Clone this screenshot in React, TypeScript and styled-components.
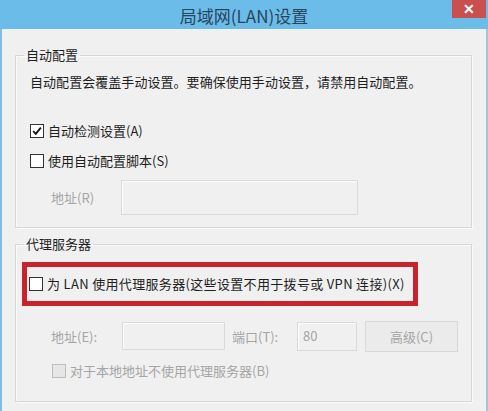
import React from 'react';
import styled, { createGlobalStyle } from 'styled-components';

const GlobalStyle = createGlobalStyle`
	html, body {
		margin: 0;
		padding: 0;
		background: #f0f0f0;
	}
	body {
		font-family: 'Noto Sans CJK SC', 'Noto Sans', 'Liberation Sans', sans-serif;
		font-size: 13px;
		color: #1e1e1e;
	}
`;

const Window = styled.div`
	width: 488px;
	height: 411px;
	display: flex;
	flex-direction: column;
	overflow: hidden;
	background: #6cbce9;
`;

const TitleBar = styled.div`
	height: 29px;
	display: grid;
	grid-template-columns: 1fr auto 1fr;
	align-items: center;
	background: #6cbce9;
`;

const Title = styled.div`
	grid-column: 2;
	font-size: 17px;
	line-height: 29px;
	color: #27465b;
	padding-top: 1px;
`;

const CloseBtn = styled.div`
	grid-column: 3;
	justify-self: end;
	align-self: start;
	width: 34px;
	height: 18px;
	margin-right: 2px;
	background: #c9504e;
	color: #fff;
	display: flex;
	align-items: center;
	justify-content: center;
	font-family: 'Liberation Sans', sans-serif;
	font-size: 14px;
	font-weight: bold;
	line-height: 1;
`;

const Body = styled.div`
	flex: 1;
	background: #f0f0f0;
	border-left: 2px solid #84bde2;
	border-right: 2px solid #a9c4d8;
	padding: 18px 14px 0 13px;
	display: flex;
	flex-direction: column;
`;

const Group = styled.fieldset<{ $top?: number; $bottom: number }>`
	margin: ${(p) => p.$top || 0}px 0 0 0;
	padding: 0 0 ${(p) => p.$bottom}px 0;
	border: 1px solid #d7d7d7;
	box-shadow: inset 1px 1px 0 #fbfbfb, 1px 1px 0 #fbfbfb;
	display: flex;
	flex-direction: column;
	min-width: 0;
`;

const Legend = styled.legend`
	margin-left: 8px;
	padding: 0 2px;
	line-height: 16px;
	font-size: 13px;
	color: #1e1e1e;
`;

const Desc = styled.div`
	margin: 10px 0 0 14px;
	line-height: 18px;
	white-space: nowrap;
	letter-spacing: 0.05px;
`;

const CheckRow = styled.label<{ $top: number; $left: number; $disabled?: boolean; $spacing?: number }>`
	display: flex;
	align-items: center;
	gap: 4px;
	margin: ${(p) => p.$top}px 0 0 ${(p) => p.$left}px;
	height: 18px;
	line-height: 18px;
	white-space: nowrap;
	letter-spacing: ${(p) => p.$spacing || 0}px;
	color: ${(p) => (p.$disabled ? '#a5a5a5' : '#1e1e1e')};
`;

const Box = styled.span<{ $disabled?: boolean }>`
	width: 12px;
	height: 12px;
	flex: none;
	border: 1px solid ${(p) => (p.$disabled ? '#bdbdbd' : '#333')};
	background: ${(p) => (p.$disabled ? '#e6e6e6' : '#fff')};
	display: flex;
	align-items: center;
	justify-content: center;
`;

const Highlight = styled.div`
	margin: 10px 0 0 6px;
	width: 384px;
	height: 34px;
	border: 5px solid #c8222d;
	display: flex;
	align-items: center;
	padding-left: 2px;
`;

const FieldRow = styled.div<{ $top: number }>`
	display: flex;
	align-items: center;
	margin-top: ${(p) => p.$top}px;
	margin-left: 35px;
`;

const FieldLabel = styled.span<{ $width: number; $gap?: number }>`
	width: ${(p) => p.$width}px;
	margin-left: ${(p) => p.$gap || 0}px;
	flex: none;
	color: #a5a5a5;
	white-space: nowrap;
`;

const Input = styled.div<{ $width: number; $height: number }>`
	width: ${(p) => p.$width}px;
	height: ${(p) => p.$height}px;
	box-sizing: border-box;
	border: 1px solid #dadada;
	box-shadow: inset 1px 1px 0 #fdfdfd;
	background: #f0f0f0;
	color: #a5a5a5;
	padding: 3px 0 0 5px;
	flex: none;
`;

const Button = styled.div`
	margin-left: 8px;
	width: 93px;
	height: 31px;
	box-sizing: border-box;
	border: 1px solid #d8d8d8;
	background: #ebebeb;
	color: #a5a5a5;
	display: flex;
	align-items: center;
	justify-content: center;
	flex: none;
	margin-top: 1px;
	align-self: flex-start;
`;

const Check = () => (
	<svg width="10" height="10" viewBox="0 0 10 10">
		<path d="M1.2 5.2 L3.8 7.8 L8.8 1.6" fill="none" stroke="#111" strokeWidth="1.8" />
	</svg>
);

const Checkbox = ({ checked, disabled }: { checked?: boolean; disabled?: boolean }) => (
	<Box $disabled={disabled}>{checked && <Check />}</Box>
);

const App = () => {
	return (
		<>
			<GlobalStyle />
			<Window>
				<TitleBar>
					<Title>局域网(LAN)设置</Title>
					<CloseBtn>✕</CloseBtn>
				</TitleBar>
				<Body>
					<Group $bottom={12}>
						<Legend>自动配置</Legend>
						<Desc>自动配置会覆盖手动设置。要确保使用手动设置，请禁用自动配置。</Desc>
						<CheckRow $top={31} $left={14}>
							<Checkbox checked />
							自动检测设置(A)
						</CheckRow>
						<CheckRow $top={12} $left={14}>
							<Checkbox />
							使用自动配置脚本(S)
						</CheckRow>
						<FieldRow $top={10}>
							<FieldLabel $width={70}>地址(R)</FieldLabel>
							<Input $width={237} $height={35} />
						</FieldRow>
					</Group>
					<Group $top={8} $bottom={21}>
						<Legend>代理服务器</Legend>
						<Highlight>
							<CheckRow $top={0} $left={0} $spacing={0.33}>
								<Checkbox />
								为 LAN 使用代理服务器(这些设置不用于拨号或 VPN 连接)(X)
							</CheckRow>
						</Highlight>
						<FieldRow $top={14}>
							<FieldLabel $width={71}>地址(E):</FieldLabel>
							<Input $width={103} $height={28} />
							<FieldLabel $width={65} $gap={7}>端口(T):</FieldLabel>
							<Input $width={60} $height={29}>80</Input>
							<Button>高级(C)</Button>
						</FieldRow>
						<CheckRow $top={10} $left={36} $disabled>
							<Checkbox disabled />
							对于本地地址不使用代理服务器(B)
						</CheckRow>
					</Group>
				</Body>
			</Window>
		</>
	);
};

export default App;
